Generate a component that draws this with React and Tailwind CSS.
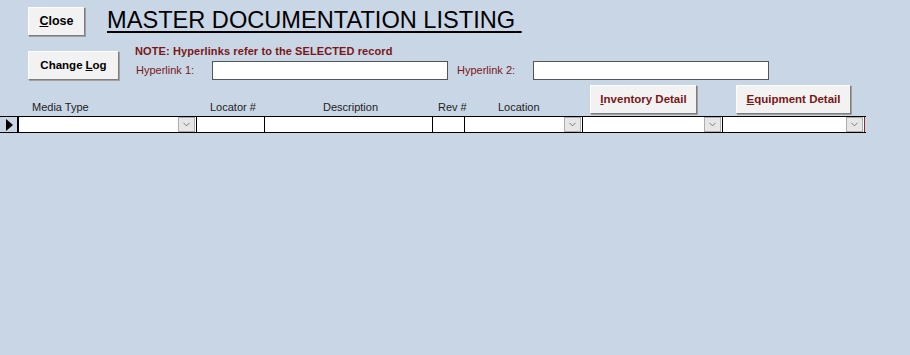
import { ChevronDown } from "lucide-react";

const btn =
  "h-[29px] bg-[#f3f2f2] border border-t-[#fdfdfd] border-l-[#fdfdfd] border-b-[#7d7d7d] border-r-[#7d7d7d] shadow-[1px_1px_0_#a0a0a0] text-[11.5px] font-bold flex items-center justify-center";

function DropBtn() {
  return (
    <div className="w-[17px] h-[15px] my-auto mr-[1px] bg-[#e6e6e6] border border-[#adadad] flex items-center justify-center">
      <ChevronDown size={11} strokeWidth={1.6} className="text-[#555]" />
    </div>
  );
}

function Combo({ width, edge = "border-black" }) {
  return (
    <div className={`flex h-full border-r ${edge} bg-white`} style={{ width }}>
      <div className="flex-1" />
      <DropBtn />
    </div>
  );
}

function Cell({ width }) {
  return <div className="h-full border-r border-black bg-white" style={{ width }} />;
}

export default function App() {
  return (
    <div className="w-[910px] h-[355px] bg-[#c9d6e6] font-['Liberation_Sans',Arial,sans-serif] text-black overflow-hidden">
      <div className="flex items-start pt-[7px]">
        <button className={`${btn} ml-[28px] w-[57px]`}>
          <span className="text-[12.5px]">
            <u>C</u>lose
          </span>
        </button>
        <h1 className="ml-[22px] text-[23.6px] leading-[24px] mt-[1px] underline decoration-2 underline-offset-[3px] whitespace-pre">
          MASTER DOCUMENTATION LISTING{" "}
        </h1>
      </div>

      <div className="flex items-start mt-[9px]">
        <button className={`${btn} ml-[28px] mt-[6px] w-[91px] h-[28px]`}>
          Change <u className="ml-[3px]">L</u>og
        </button>
        <div className="ml-[16px]">
          <div className="text-[11px] font-bold text-[#7a1616] leading-[13px] tracking-[0.1px]">
            NOTE: Hyperlinks refer to the SELECTED record
          </div>
          <div className="flex items-center mt-[3px] text-[11px] text-[#7a1616]">
            <span className="w-[77px] pl-[1px]">Hyperlink 1:</span>
            <div className="w-[236px] h-[19px] bg-white border border-[#555]" />
            <span className="w-[85px] pl-[9px]">Hyperlink 2:</span>
            <div className="w-[236px] h-[19px] bg-white border border-[#555]" />
          </div>
        </div>
      </div>

      <div className="flex items-end mt-[5px] h-[29px] pl-[32px] text-[11px] text-[#222]">
        <span className="w-[178px] leading-[13px]">Media Type</span>
        <span className="w-[113px] leading-[13px]">Locator #</span>
        <span className="w-[115px] leading-[13px]">Description</span>
        <span className="w-[60px] leading-[13px]">Rev #</span>
        <span className="w-[92px] leading-[13px]">Location</span>
        <button className={`${btn} self-start w-[107px] h-[28px] text-[#7a1616]`}>
          <u>I</u>nventory Detail
        </button>
        <button className={`${btn} ml-[39px] self-start w-[115px] h-[28px] text-[#7a1616]`}>
          <u>E</u>quipment Detail
        </button>
      </div>

      <div className="flex mt-[2px] h-[17px] w-[866px] border-y border-black">
        <div className="w-[19px] h-full flex items-center justify-center border-r-2 border-black">
          <div className="w-0 h-0 border-y-[6px] border-y-transparent border-l-[7px] border-l-black ml-[2px]" />
        </div>
        <Combo width={178} />
        <Cell width={68} />
        <Cell width={168} />
        <Cell width={32} />
        <Combo width={118} />
        <Combo width={140} />
        <Combo width={142} edge="border-[#8a2a2a]" />
      </div>
    </div>
  );
}
